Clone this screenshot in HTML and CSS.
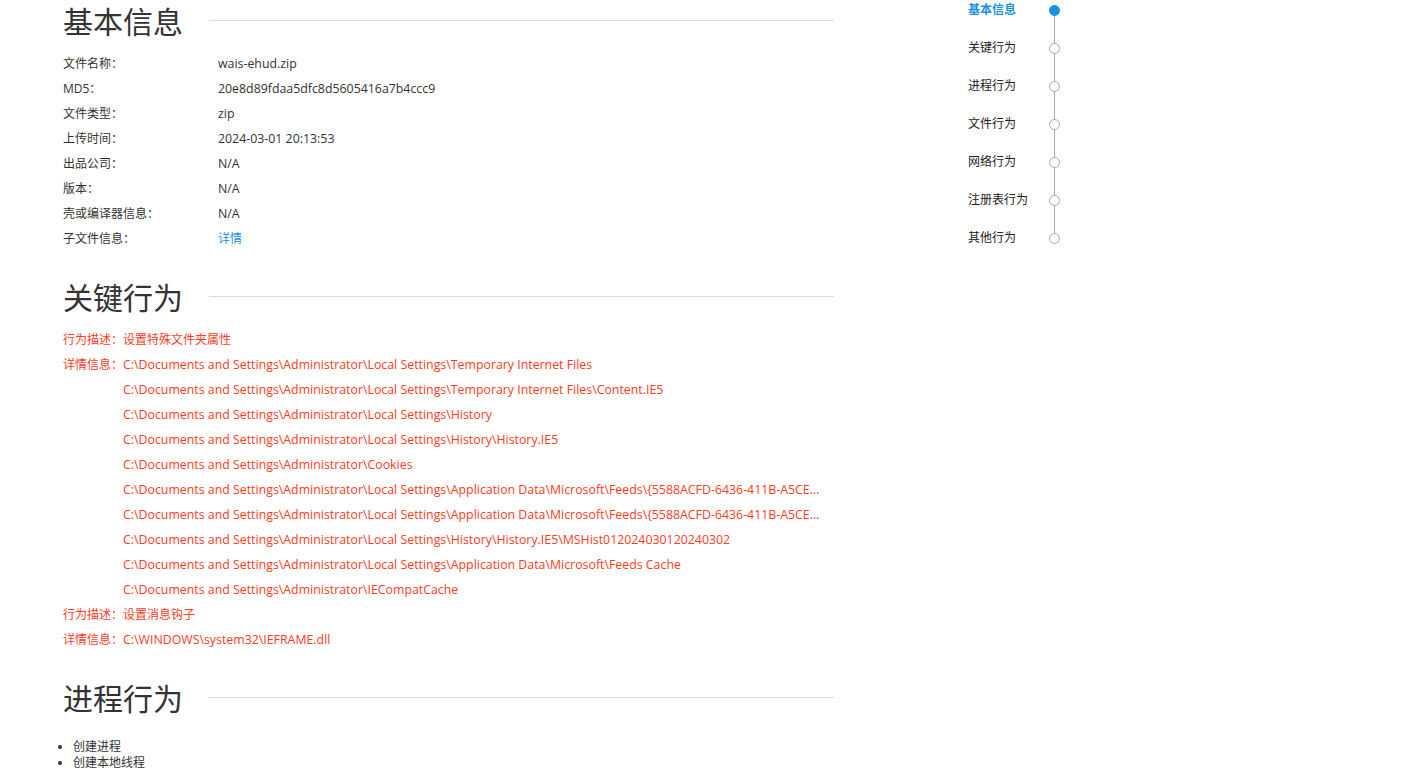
FILE: index.html
```html
<!DOCTYPE html>
<html>
  <head>
    <meta charset="utf-8">
    <title>分析报告</title>
    <link rel="stylesheet" href="styles.css">
  </head>
  <body>
    <div class="page">
      <div class="main">
        <div class="section">
          <h2 class="title">基本信息</h2>
          <div class="info">
            <div class="row"><span class="label">文件名称：</span><span class="val">wais-ehud.zip</span></div>
            <div class="row"><span class="label">MD5：</span><span class="val">20e8d89fdaa5dfc8d5605416a7b4ccc9</span></div>
            <div class="row"><span class="label">文件类型：</span><span class="val">zip</span></div>
            <div class="row"><span class="label">上传时间：</span><span class="val">2024-03-01 20:13:53</span></div>
            <div class="row"><span class="label">出品公司：</span><span class="val">N/A</span></div>
            <div class="row"><span class="label">版本：</span><span class="val">N/A</span></div>
            <div class="row"><span class="label">壳或编译器信息：</span><span class="val">N/A</span></div>
            <div class="row"><span class="label">子文件信息：</span><a class="link" href="#">详情</a></div>
          </div>
        </div>

        <div class="section">
          <h2 class="title">关键行为</h2>
          <div class="behavior">
            <div class="brow"><span class="blabel">行为描述：</span><span>设置特殊文件夹属性</span></div>
            <div class="brow"><span class="blabel">详情信息：</span><span class="path">C:\Documents and Settings\Administrator\Local Settings\Temporary Internet Files</span></div>
            <div class="brow"><span class="blabel"></span><span class="path">C:\Documents and Settings\Administrator\Local Settings\Temporary Internet Files\Content.IE5</span></div>
            <div class="brow"><span class="blabel"></span><span class="path">C:\Documents and Settings\Administrator\Local Settings\History</span></div>
            <div class="brow"><span class="blabel"></span><span class="path">C:\Documents and Settings\Administrator\Local Settings\History\History.IE5</span></div>
            <div class="brow"><span class="blabel"></span><span class="path">C:\Documents and Settings\Administrator\Cookies</span></div>
            <div class="brow"><span class="blabel"></span><span class="path">C:\Documents and Settings\Administrator\Local Settings\Application Data\Microsoft\Feeds\{5588ACFD-6436-411B-A5CE-666AE6A92D3D}~\WebSlices~</span></div>
            <div class="brow"><span class="blabel"></span><span class="path">C:\Documents and Settings\Administrator\Local Settings\Application Data\Microsoft\Feeds\{5588ACFD-6436-411B-A5CE-666AE6A92D3D}~</span></div>
            <div class="brow"><span class="blabel"></span><span class="path">C:\Documents and Settings\Administrator\Local Settings\History\History.IE5\MSHist012024030120240302</span></div>
            <div class="brow"><span class="blabel"></span><span class="path">C:\Documents and Settings\Administrator\Local Settings\Application Data\Microsoft\Feeds Cache</span></div>
            <div class="brow"><span class="blabel"></span><span class="path">C:\Documents and Settings\Administrator\IECompatCache</span></div>
            <div class="brow"><span class="blabel">行为描述：</span><span>设置消息钩子</span></div>
            <div class="brow"><span class="blabel">详情信息：</span><span class="path">C:\WINDOWS\system32\IEFRAME.dll</span></div>
          </div>
        </div>

        <div class="section">
          <h2 class="title">进程行为</h2>
          <ul class="list">
            <li>创建进程</li>
            <li>创建本地线程</li>
          </ul>
        </div>
      </div>

      <div class="nav">
        <div class="nav-item active"><span class="nav-text">基本信息</span><span class="dot"></span></div>
        <div class="nav-item"><span class="nav-text">关键行为</span><span class="dot"></span></div>
        <div class="nav-item"><span class="nav-text">进程行为</span><span class="dot"></span></div>
        <div class="nav-item"><span class="nav-text">文件行为</span><span class="dot"></span></div>
        <div class="nav-item"><span class="nav-text">网络行为</span><span class="dot"></span></div>
        <div class="nav-item"><span class="nav-text">注册表行为</span><span class="dot"></span></div>
        <div class="nav-item"><span class="nav-text">其他行为</span><span class="dot"></span></div>
      </div>
    </div>
  </body>
</html>
```

FILE: styles.css
```css
body{
    margin:0;
    font-family: "Open Sans", "Noto Sans CJK SC", sans-serif;
    color:#333;
    background:#fff;
}

.page{
    display:flex;
    align-items:flex-start;
    padding-left:63px;
}

.main{
    width:771px;
}

.section{
    padding-bottom:25px;
}

.title{
    display:flex;
    align-items:center;
    margin:0 0 10px 0;
    height:40px;
    font-size:30px;
    font-weight:normal;
    color:#333;
}
.title::after{
    content:"";
    flex:1;
    height:1px;
    margin-left:26px;
    background:#dcdcdc;
}

.info,
.behavior{
    padding-top:1px;
}

.row{
    display:flex;
    height:25px;
    line-height:25px;
    font-size:12px;
}
.label{
    width:155px;
    flex:none;
}
.val{
    font-size:12.35px;
}
.link{
    color:#1890e6;
    text-decoration:none;
}

.behavior{
    color:#ff3b22;
    font-size:12px;
}
.brow{
    display:flex;
    height:25px;
    line-height:25px;
}
.blabel{
    width:60px;
    flex:none;
}
.path{
    font-size:12.35px;
    white-space:nowrap;
    overflow:hidden;
    text-overflow:ellipsis;
    max-width:700px;
}

.list{
    margin:0;
    padding:12px 0 0 10px;
    font-size:12px;
    line-height:16px;
}

/* right side anchor steps */
.nav{
    position:relative;
    margin-left:134px;
    display:flex;
    flex-direction:column;
    gap:18px;
}
.nav::before{
    content:"";
    position:absolute;
    left:86px;
    top:10px;
    bottom:10px;
    width:1px;
    background:#aaa;
}
.nav-item{
    display:flex;
    align-items:center;
    height:20px;
    line-height:18px;
    font-size:12px;
    color:#222;
}
.nav-text{
    width:81px;
}
.dot{
    position:relative;
    width:9px;
    height:9px;
    border:1px solid #aaa;
    border-radius:50%;
    background:#fff;
}
.active .nav-text{
    color:#1890e6;
    font-weight:bold;
}
.active .dot{
    background:#1890e6;
    border-color:#1890e6;
}
```
